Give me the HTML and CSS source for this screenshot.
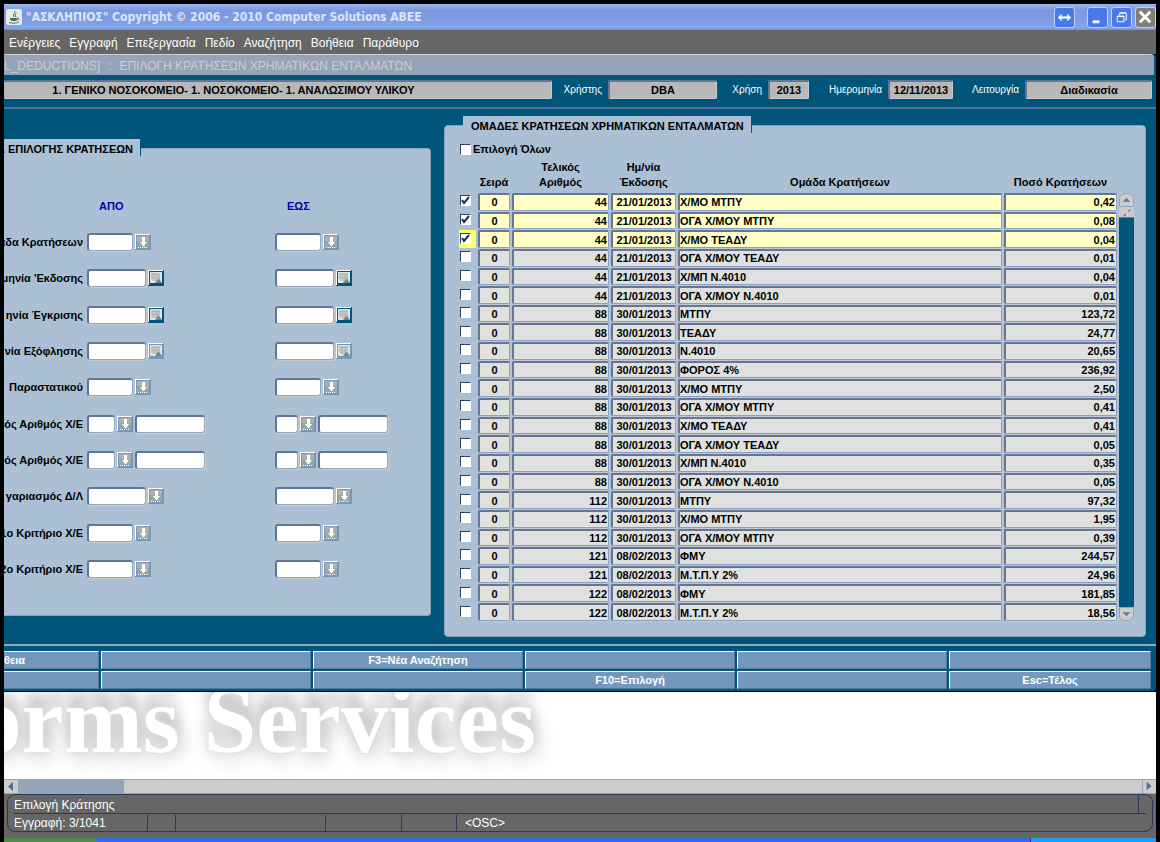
FILE: index.html
```html
<!DOCTYPE html>
<html lang="el">
<head>
    <meta charset="UTF-8">
    <meta name="viewport" content="width=device-width, initial-scale=1.0">
    <title>ΑΣΚΛΗΠΙΟΣ</title>
    <link rel="stylesheet" href="styles.css">
</head>
<body>
    <svg class="defs" width="0" height="0" aria-hidden="true">
        <symbol id="lov" viewBox="0 0 16 16">
            <path d="M0 0h16v16H0z" fill="#7498bc"/>
            <path d="M0 0h15v1H1v14H0z" fill="#fff"/>
            <path d="M2 2h12v5H2z" fill="#b0b0b0"/>
            <path d="M2 7h12v7H2z" fill="#9aa6a2"/>
            <path d="M7 3h3v5h2l-3 4h-1L5 8h2z" fill="#fff"/>
            <path d="M3 13.5h10" stroke="#fff" stroke-dasharray="1 1"/>
        </symbol>
        <symbol id="cal" viewBox="0 0 16 16">
            <path d="M0 0h16v16H0z" fill="currentColor"/>
            <path d="M0 0h15v1H1v14H0z" fill="#fff"/>
            <path d="M2 2h12v11H2z" fill="#e2e4e4"/>
            <path d="M3 3h9v8H5l-2-2z" fill="#c2c2c4"/>
            <path d="M4 4.5h8M4 7.5h8" stroke="#aaa" stroke-dasharray="1 1"/>
            <path d="M7 13l3-4h1l3 4z" fill="#6f8880"/>
        </symbol>
    </svg>

    <div class="window">
        <header class="titlebar">
            <svg class="java" viewBox="0 0 16 16" aria-hidden="true">
                <rect x="0" y="0" width="16" height="16" rx="2" fill="#e9ece6"/>
                <path d="M8.5 2c2 2-2.5 3-.5 6M10.5 4c-2 1.5-1.5 2-.5 4" stroke="#3f7a3c" fill="none"/>
                <path d="M4 9h7v1.5c0 2-6 2-7 0z" fill="#4c6f66"/>
                <path d="M11 9c3-.5 2 2.5-.5 2M3 13.5c3 1 7 1 10-.5" stroke="#4c6f66" fill="none"/>
            </svg>
            <h1>"ΑΣΚΛΗΠΙΟΣ" Copyright © 2006 - 2010 Computer Solutions ABEE</h1>
            <div class="controls">
                <button class="ctl ctl-move" aria-label="Μετακίνηση">
                    <svg viewBox="0 0 20 20"><path d="M3 10l4-4v3h6V6l4 4-4 4v-3H7v3z" fill="#fff"/></svg>
                </button>
                <button class="ctl" aria-label="Ελαχιστοποίηση">
                    <svg viewBox="0 0 20 20"><path d="M5 13h7v3H5z" fill="#fff"/></svg>
                </button>
                <button class="ctl" aria-label="Επαναφορά">
                    <svg viewBox="0 0 20 20"><path d="M8 8V5.5h7v7h-2M5.5 8.5h7v6h-7zM5 9h8M8 5h7" stroke="#fff" fill="none"/></svg>
                </button>
                <button class="ctl ctl-close" aria-label="Κλείσιμο">
                    <svg viewBox="0 0 20 20"><path d="M4 4l11 11M15 4L4 15" stroke="#fff" stroke-width="3"/></svg>
                </button>
            </div>
        </header>

        <nav class="menubar">
            <a href="#">Ενέργειες</a>
            <a href="#">Εγγραφή</a>
            <a href="#">Επεξεργασία</a>
            <a href="#">Πεδίο</a>
            <a href="#">Αναζήτηση</a>
            <a href="#">Βοήθεια</a>
            <a href="#">Παράθυρο</a>
        </nav>

        <main class="form">
            <h2 class="form-title"><span>L_DEDUCTIONS]</span><span>:</span><span>ΕΠΙΛΟΓΗ ΚΡΑΤΗΣΕΩΝ ΧΡΗΜΑΤΙΚΩΝ ΕΝΤΑΛΜΑΤΩΝ</span></h2>

            <div class="info">
                <input class="ro ro-unit" aria-label="Μονάδα" value="1. ΓΕΝΙΚΟ ΝΟΣΟΚΟΜΕΙΟ- 1. ΝΟΣΟΚΟΜΕΙΟ- 1. ΑΝΑΛΩΣΙΜΟΥ ΥΛΙΚΟΥ" readonly>
                <label for="user">Χρήστης</label>
                <input class="ro" id="user" value="DBA" readonly>
                <label for="year">Χρήση</label>
                <input class="ro" id="year" value="2013" readonly>
                <label for="date">Ημερομηνία</label>
                <input class="ro" id="date" value="12/11/2013" readonly>
                <label for="mode">Λειτουργία</label>
                <input class="ro" id="mode" value="Διαδικασία" readonly>
            </div>

            <div class="panels">
                <section class="panel criteria">
                    <h3 class="tab">Α ΕΠΙΛΟΓΗΣ ΚΡΑΤΗΣΕΩΝ</h3>
                    <div class="range-head">
                        <span>ΑΠΟ</span>
                        <span>ΕΩΣ</span>
                    </div>
                    <div class="ranges">
                        <div class="range">
                            <label for="c1">άδα Κρατήσεων</label>
                            <div class="pick"><input id="c1" class="w-s"><button aria-label="Λίστα"><svg><use href="#lov"/></svg></button></div>
                            <div class="pick"><input class="w-s" aria-label="Έως"><button aria-label="Λίστα"><svg><use href="#lov"/></svg></button></div>
                        </div>
                        <div class="range">
                            <label for="c2">μηνία 'Εκδοσης</label>
                            <div class="pick"><input id="c2" class="w-m"><button class="dark" aria-label="Ημερολόγιο"><svg><use href="#cal"/></svg></button></div>
                            <div class="pick"><input class="w-m" aria-label="Έως"><button class="dark" aria-label="Ημερολόγιο"><svg><use href="#cal"/></svg></button></div>
                        </div>
                        <div class="range">
                            <label for="c3">ηνία Έγκρισης</label>
                            <div class="pick"><input id="c3" class="w-m"><button class="dark" aria-label="Ημερολόγιο"><svg><use href="#cal"/></svg></button></div>
                            <div class="pick"><input class="w-m" aria-label="Έως"><button class="dark" aria-label="Ημερολόγιο"><svg><use href="#cal"/></svg></button></div>
                        </div>
                        <div class="range">
                            <label for="c4">νία Εξόφλησης</label>
                            <div class="pick"><input id="c4" class="w-m"><button aria-label="Ημερολόγιο"><svg><use href="#cal"/></svg></button></div>
                            <div class="pick"><input class="w-m" aria-label="Έως"><button aria-label="Ημερολόγιο"><svg><use href="#cal"/></svg></button></div>
                        </div>
                        <div class="range">
                            <label for="c5">Παραστατικού</label>
                            <div class="pick"><input id="c5" class="w-s"><button aria-label="Λίστα"><svg><use href="#lov"/></svg></button></div>
                            <div class="pick"><input class="w-s" aria-label="Έως"><button aria-label="Λίστα"><svg><use href="#lov"/></svg></button></div>
                        </div>
                        <div class="range">
                            <label for="c6">ός Αριθμός Χ/Ε</label>
                            <div class="pick"><input id="c6" class="w-xs"><button aria-label="Λίστα"><svg><use href="#lov"/></svg></button><input class="w-l" aria-label="Αριθμός από"></div>
                            <div class="pick"><input class="w-xxs" aria-label="Έως"><button aria-label="Λίστα"><svg><use href="#lov"/></svg></button><input class="w-l" aria-label="Αριθμός έως"></div>
                        </div>
                        <div class="range">
                            <label for="c7">ός Αριθμός Χ/Ε</label>
                            <div class="pick"><input id="c7" class="w-xs"><button aria-label="Λίστα"><svg><use href="#lov"/></svg></button><input class="w-l" aria-label="Αριθμός από"></div>
                            <div class="pick"><input class="w-xxs" aria-label="Έως"><button aria-label="Λίστα"><svg><use href="#lov"/></svg></button><input class="w-l" aria-label="Αριθμός έως"></div>
                        </div>
                        <div class="range">
                            <label for="c8">γαριασμός Δ/Λ</label>
                            <div class="pick"><input id="c8" class="w-m"><button aria-label="Λίστα"><svg><use href="#lov"/></svg></button></div>
                            <div class="pick"><input class="w-m" aria-label="Έως"><button aria-label="Λίστα"><svg><use href="#lov"/></svg></button></div>
                        </div>
                        <div class="range">
                            <label for="c9">1ο Κριτήριο Χ/Ε</label>
                            <div class="pick"><input id="c9" class="w-s"><button aria-label="Λίστα"><svg><use href="#lov"/></svg></button></div>
                            <div class="pick"><input class="w-s" aria-label="Έως"><button aria-label="Λίστα"><svg><use href="#lov"/></svg></button></div>
                        </div>
                        <div class="range">
                            <label for="c10">2ο Κριτήριο Χ/Ε</label>
                            <div class="pick"><input id="c10" class="w-s"><button aria-label="Λίστα"><svg><use href="#lov"/></svg></button></div>
                            <div class="pick"><input class="w-s" aria-label="Έως"><button aria-label="Λίστα"><svg><use href="#lov"/></svg></button></div>
                        </div>
                    </div>
                </section>

                <section class="panel groups">
                    <h3 class="tab">ΟΜΑΔΕΣ ΚΡΑΤΗΣΕΩΝ ΧΡΗΜΑΤΙΚΩΝ ΕΝΤΑΛΜΑΤΩΝ</h3>
                    <label class="all"><input type="checkbox">Επιλογή Όλων</label>
                    <div class="grid">
                        <table>
                            <thead>
                                <tr>
                                    <th class="c-check"></th>
                                    <th class="c-row">Σειρά</th>
                                    <th class="c-num">Τελικός<br>Αριθμός</th>
                                    <th class="c-date">Ημ/νία<br>Έκδοσης</th>
                                    <th>Ομάδα Κρατήσεων</th>
                                    <th class="c-sum">Ποσό Κρατήσεων</th>
                                </tr>
                            </thead>
                            <tbody>
                                <tr class="on"><td><input type="checkbox" aria-label="Επιλογή" checked></td><td>0</td><td>44</td><td>21/01/2013</td><td>Χ/ΜΟ ΜΤΠΥ</td><td>0,42</td></tr>
                                <tr class="on"><td><input type="checkbox" aria-label="Επιλογή" checked></td><td>0</td><td>44</td><td>21/01/2013</td><td>ΟΓΑ Χ/ΜΟΥ ΜΤΠΥ</td><td>0,08</td></tr>
                                <tr class="on current"><td><input type="checkbox" aria-label="Επιλογή" checked></td><td>0</td><td>44</td><td>21/01/2013</td><td>Χ/ΜΟ ΤΕΑΔΥ</td><td>0,04</td></tr>
                                <tr><td><input type="checkbox" aria-label="Επιλογή"></td><td>0</td><td>44</td><td>21/01/2013</td><td>ΟΓΑ Χ/ΜΟΥ ΤΕΑΔΥ</td><td>0,01</td></tr>
                                <tr><td><input type="checkbox" aria-label="Επιλογή"></td><td>0</td><td>44</td><td>21/01/2013</td><td>Χ/ΜΠ Ν.4010</td><td>0,04</td></tr>
                                <tr><td><input type="checkbox" aria-label="Επιλογή"></td><td>0</td><td>44</td><td>21/01/2013</td><td>ΟΓΑ Χ/ΜΟΥ Ν.4010</td><td>0,01</td></tr>
                                <tr><td><input type="checkbox" aria-label="Επιλογή"></td><td>0</td><td>88</td><td>30/01/2013</td><td>ΜΤΠΥ</td><td>123,72</td></tr>
                                <tr><td><input type="checkbox" aria-label="Επιλογή"></td><td>0</td><td>88</td><td>30/01/2013</td><td>ΤΕΑΔΥ</td><td>24,77</td></tr>
                                <tr><td><input type="checkbox" aria-label="Επιλογή"></td><td>0</td><td>88</td><td>30/01/2013</td><td>Ν.4010</td><td>20,65</td></tr>
                                <tr><td><input type="checkbox" aria-label="Επιλογή"></td><td>0</td><td>88</td><td>30/01/2013</td><td>ΦΟΡΟΣ 4%</td><td>236,92</td></tr>
                                <tr><td><input type="checkbox" aria-label="Επιλογή"></td><td>0</td><td>88</td><td>30/01/2013</td><td>Χ/ΜΟ ΜΤΠΥ</td><td>2,50</td></tr>
                                <tr><td><input type="checkbox" aria-label="Επιλογή"></td><td>0</td><td>88</td><td>30/01/2013</td><td>ΟΓΑ Χ/ΜΟΥ ΜΤΠΥ</td><td>0,41</td></tr>
                                <tr><td><input type="checkbox" aria-label="Επιλογή"></td><td>0</td><td>88</td><td>30/01/2013</td><td>Χ/ΜΟ ΤΕΑΔΥ</td><td>0,41</td></tr>
                                <tr><td><input type="checkbox" aria-label="Επιλογή"></td><td>0</td><td>88</td><td>30/01/2013</td><td>ΟΓΑ Χ/ΜΟΥ ΤΕΑΔΥ</td><td>0,05</td></tr>
                                <tr><td><input type="checkbox" aria-label="Επιλογή"></td><td>0</td><td>88</td><td>30/01/2013</td><td>Χ/ΜΠ Ν.4010</td><td>0,35</td></tr>
                                <tr><td><input type="checkbox" aria-label="Επιλογή"></td><td>0</td><td>88</td><td>30/01/2013</td><td>ΟΓΑ Χ/ΜΟΥ Ν.4010</td><td>0,05</td></tr>
                                <tr><td><input type="checkbox" aria-label="Επιλογή"></td><td>0</td><td>112</td><td>30/01/2013</td><td>ΜΤΠΥ</td><td>97,32</td></tr>
                                <tr><td><input type="checkbox" aria-label="Επιλογή"></td><td>0</td><td>112</td><td>30/01/2013</td><td>Χ/ΜΟ ΜΤΠΥ</td><td>1,95</td></tr>
                                <tr><td><input type="checkbox" aria-label="Επιλογή"></td><td>0</td><td>112</td><td>30/01/2013</td><td>ΟΓΑ Χ/ΜΟΥ ΜΤΠΥ</td><td>0,39</td></tr>
                                <tr><td><input type="checkbox" aria-label="Επιλογή"></td><td>0</td><td>121</td><td>08/02/2013</td><td>ΦΜΥ</td><td>244,57</td></tr>
                                <tr><td><input type="checkbox" aria-label="Επιλογή"></td><td>0</td><td>121</td><td>08/02/2013</td><td>Μ.Τ.Π.Υ 2%</td><td>24,96</td></tr>
                                <tr><td><input type="checkbox" aria-label="Επιλογή"></td><td>0</td><td>122</td><td>08/02/2013</td><td>ΦΜΥ</td><td>181,85</td></tr>
                                <tr><td><input type="checkbox" aria-label="Επιλογή"></td><td>0</td><td>122</td><td>08/02/2013</td><td>Μ.Τ.Π.Υ 2%</td><td>18,56</td></tr>
                            </tbody>
                        </table>
                        <div class="vscroll">
                            <button class="up" aria-label="Πάνω"><svg viewBox="0 0 15 14"><path d="M3 9l4-4h1l4 4z" fill="#64769a"/></svg></button>
                            <span class="vthumb"><svg viewBox="0 0 13 10"><path d="M4 8l2-2M8 4l2-2" stroke="#64769a"/></svg></span>
                            <span class="vtrack"></span>
                            <button class="down" aria-label="Κάτω"><svg viewBox="0 0 15 14"><path d="M3 5h9L8 9H7z" fill="#64769a"/></svg></button>
                        </div>
                    </div>
                </section>
            </div>

            <div class="keys">
                <button class="first">θεια</button>
                <button></button>
                <button>F3=Νέα Αναζήτηση</button>
                <button></button>
                <button></button>
                <button></button>
                <button class="first"></button>
                <button></button>
                <button></button>
                <button>F10=Επιλογή</button>
                <button></button>
                <button>Esc=Τέλος</button>
            </div>
        </main>

        <div class="desktop"><span>orms Services</span></div>

        <div class="hscroll">
            <button class="left" aria-label="Αριστερά"><svg viewBox="0 0 14 13"><path d="M9 2v9L4 6.5z" fill="#4f6b94"/></svg></button>
            <span class="hthumb"></span>
            <button class="right" aria-label="Δεξιά"><svg viewBox="0 0 14 13"><path d="M4 2v9l5-4.5z" fill="#4f6b94"/></svg></button>
        </div>

        <footer class="status">
            <div class="status-box">
                <p class="message">Επιλογή Κράτησης</p>
                <div class="cells">
                    <span class="s-record">Εγγραφή: 3/1041</span>
                    <span class="s-a"></span>
                    <span class="s-b"></span>
                    <span class="s-c"></span>
                    <span class="s-d"></span>
                    <span class="s-osc">&lt;OSC&gt;</span>
                </div>
            </div>
        </footer>

        <div class="taskbar"><span class="start"></span><span class="tray"></span></div>
    </div>
</body>
</html>
```
FILE: styles.css
```css
* {
    box-sizing: border-box;
}
body {
    margin: 0;
    background-color: #000;
    font-family: "Liberation Sans", Arial, sans-serif;
    font-size: 11px;
    color: #000;
}
h1, h2, h3, p {
    margin: 0;
    font-weight: normal;
}
button {
    padding: 0;
    border: none;
    font: inherit;
    color: inherit;
    background: none;
}
svg {
    display: block;
}
.defs {
    position: absolute;
}
.window {
    margin: 4px 4px 0;
    min-height: calc(100vh - 4px);
    overflow: hidden;
    display: flex;
    flex-direction: column;
}

/* title bar and menu */
.titlebar {
    display: flex;
    align-items: center;
    height: 26px;
    padding: 0 0 0 2px;
    background: linear-gradient(#9cb8ee, #7c98e0 25%, #7f9ee4 65%, #82a8ec 90%, #6f92dc);
}
.java {
    width: 16px;
    height: 16px;
    margin-right: 4px;
}
.titlebar h1 {
    flex: 1;
    font-family: "DejaVu Sans Condensed", "DejaVu Sans", sans-serif;
    font-size: 12px;
    font-weight: bold;
    color: #dbe4fa;
}
.controls {
    display: flex;
    gap: 3px;
}
.ctl {
    width: 21px;
    height: 21px;
    border: 1px solid #c3d2f6;
    border-radius: 3px;
    background-color: #4a78e4;
}
.ctl-move {
    margin-right: 9px;
}
.ctl-close {
    background-color: #7f8078;
}
.menubar {
    display: flex;
    align-items: center;
    gap: 9px;
    height: 24px;
    padding: 2px 5px 0;
    background-color: #666;
}
.menubar a {
    color: #fff;
    font-size: 12px;
    text-decoration: none;
}

/* form window */
.form {
    background-color: #00557b;
    border-bottom: 1px solid #000;
    border-radius: 0 4px 4px 0;
    overflow: hidden;
}
.form-title {
    display: flex;
    gap: 8px;
    height: 21px;
    margin-right: 2px;
    border-top: 1px solid #ccc;
    border-top-right-radius: 4px;
    background-color: #95a4b8;
    color: #ccc;
    font-size: 12px;
    line-height: 22px;
}
.info {
    display: grid;
    grid-template-columns: 1fr 56px 109px 51px 41px 79px 65px 72px 127px;
    padding: 5px 4px 7px 0;
    border-bottom: 2px solid #54719b;
}
.info label {
    padding-right: 6px;
    color: #fff;
    font-size: 10px;
    line-height: 20px;
    text-align: right;
}
.ro {
    min-width: 0;
    width: 100%;
    height: 19px;
    padding: 0;
    border: 2px solid #64759a;
    border-right: 1px solid #ccc;
    border-bottom: 1px solid #ccc;
    border-radius: 2px;
    background-color: #b8b8b8;
    font: bold 11px "Liberation Sans", Arial, sans-serif;
    text-align: center;
}
.ro-unit {
    padding-right: 88px;
    border-left: none;
}

/* panels */
.panels {
    display: flex;
    align-items: flex-start;
    gap: 13px;
    padding: 16px 10px 7px 0;
}
.panel {
    border: 1px solid #8fa0ba;
    border-radius: 4px;
    background-color: #abc0d4;
    font-weight: bold;
}
.tab {
    width: fit-content;
    height: 17px;
    border-right: 1px solid #00557b;
    background-color: #abc0d4;
    font-size: 11px;
    font-weight: bold;
    line-height: 20px;
}
.criteria {
    width: 427px;
    height: 468px;
    margin-top: 23px;
    border-left: none;
    border-radius: 0 4px 4px 0;
}
.criteria .tab {
    margin: -10px 0 0 -7px;
    padding-right: 7px;
}
.range-head {
    display: grid;
    grid-template-columns: 188px 1fr;
    padding: 43px 0 0 95px;
    color: #0000a8;
    line-height: 14px;
}
.ranges {
    display: flex;
    flex-direction: column;
    justify-content: space-between;
    height: 345px;
    margin-top: 20px;
}
.range {
    display: grid;
    grid-template-columns: 83px 188px 1fr;
    align-items: center;
    height: 18px;
}
.range label {
    display: flex;
    justify-content: flex-end;
    padding-right: 4px;
    overflow: hidden;
    white-space: nowrap;
}
.pick {
    display: flex;
    align-items: center;
    gap: 2px;
}
.pick input {
    height: 18px;
    padding: 0 2px;
    border: 1px solid #95a4b8;
    border-top: 2px solid #64759a;
    border-left: 2px solid #64759a;
    border-radius: 3px;
    box-shadow: 1px 1px 0 #ccc;
    background-color: #fff;
}
.pick button {
    width: 16px;
    height: 16px;
    color: #7498bc;
}
.pick button.dark {
    color: #00557b;
}
.pick svg {
    width: 16px;
    height: 16px;
}
.w-xxs {
    width: 23px;
}
.w-xs {
    width: 28px;
}
.w-s {
    width: 46px;
}
.w-m {
    width: 59px;
}
.w-l {
    width: 70px;
}

/* deduction groups */
.groups {
    flex: 1;
    height: 512px;
}
.groups .tab {
    margin: -10px 0 0 18px;
    padding: 0 7px 0 8px;
}
.all {
    display: flex;
    align-items: center;
    gap: 2px;
    height: 16px;
    margin: 8px 0 0 15px;
}
input[type="checkbox"] {
    appearance: none;
    display: block;
    width: 11px;
    height: 11px;
    margin: 0;
    border: 1px solid #fff;
    border-top-color: #333f5c;
    border-left-color: #333f5c;
    background-color: #fff;
}
input[type="checkbox"]:checked {
    background-image: url("data:image/svg+xml,%3Csvg xmlns='http://www.w3.org/2000/svg' viewBox='0 0 9 9'%3E%3Cpath d='M1 4l2 3 5-6' fill='none' stroke='%2323304e' stroke-width='2'/%3E%3C/svg%3E");
}
.grid {
    display: flex;
    margin: 2px 11px 0 12px;
}
.grid table {
    flex: 1;
    height: 463px;
    table-layout: fixed;
    border-spacing: 2px 1px;
}
.grid thead tr {
    height: 32px;
}
.grid th {
    padding: 0 0 2px;
    line-height: 15px;
    vertical-align: bottom;
    white-space: nowrap;
}
.c-check {
    width: 17px;
}
.c-row {
    width: 32px;
}
.c-num {
    width: 97px;
}
.c-date {
    width: 65px;
}
.c-sum {
    width: 113px;
}
.grid td {
    padding: 0;
    border: 1px solid #8c9fbe;
    border-top: 2px solid #64759a;
    border-left: 2px solid #64759a;
    border-radius: 2px;
    box-shadow: 1px 1px 0 #c4c8cc;
    background-color: #dfe1df;
    line-height: 12px;
    text-align: center;
}
.grid td:first-child {
    padding: 0 0 2px 1px;
    border: none;
    border-radius: 0;
    box-shadow: none;
    background: none;
}
.grid td:nth-child(3),
.grid td:nth-child(6) {
    padding-right: 1px;
    text-align: right;
}
.grid td:nth-child(5) {
    text-align: left;
}
.grid .on td {
    background-color: #ffffc6;
}
.grid .on td:first-child {
    background: none;
}
.grid .current td:first-child {
    background-color: #ffff66;
}
.vscroll {
    display: flex;
    flex-direction: column;
    width: 15px;
    margin: 34px 0 1px;
}
.vscroll button {
    height: 14px;
    border: 1px solid #95a4b8;
    background-color: #ccc;
}
.vscroll .up {
    border-radius: 6px 6px 0 0;
}
.vscroll .down {
    border-radius: 0 0 6px 6px;
}
.vthumb {
    height: 11px;
    border-bottom: 1px solid #64759a;
    background-color: #ccc;
}
.vtrack {
    flex: 1;
    background-color: #00557b;
}

/* function keys */
.keys {
    display: grid;
    grid-template-columns: 95px repeat(4, 210px) 1fr;
    gap: 2px;
    padding: 5px 5px 2px 0;
    border-top: 2px solid #95a4b8;
}
.keys button {
    height: 18px;
    border: 1px solid #5a7699;
    border-top-color: #fff;
    border-left-color: #fff;
    background-color: #7498bc;
    color: #fff;
    font-weight: bold;
}
.keys .first {
    border-left: none;
    text-align: left;
}

/* area behind the form */
.desktop {
    height: 87px;
    overflow: hidden;
    background-color: #fff;
}
.desktop span {
    display: block;
    margin: -27px 0 0 -30px;
    color: #fff;
    font: bold 95px/110px "Liberation Serif", "Times New Roman", serif;
    text-shadow: 0 0 4px #ddd, 0 -16px 12px #ccc, 0 -4px 16px #ccc, 4px 6px 20px #ccc;
    white-space: nowrap;
}
.hscroll {
    display: flex;
    height: 15px;
    border: 1px solid #95a4b8;
    border-width: 1px 0;
    background-color: #ccc;
}
.hscroll button {
    width: 14px;
    background-color: #ccc;
}
.hscroll .left {
    border-radius: 7px 0 0 7px;
}
.hscroll .right {
    margin-left: auto;
    border-left: 1px solid #95a4b8;
}
.hthumb {
    width: 106px;
    background-color: #95a4b8;
}

/* status line */
.status {
    padding: 0 3px 6px;
    background-color: #666;
    color: #fff;
    font-size: 12px;
}
.status-box {
    height: 38px;
    padding: 0 6px;
    border: 1px solid #2c3a55;
    border-radius: 8px;
}
.message {
    height: 19px;
    border-bottom: 1px solid #2c3a55;
    line-height: 20px;
}
.message::after {
    content: "";
    float: right;
    height: 18px;
    margin-right: 7px;
    border-right: 1px solid #2c3a55;
}
.cells {
    display: flex;
    height: 16px;
    margin-top: 1px;
    line-height: 16px;
}
.cells span {
    border-right: 1px solid #2c3a55;
}
.s-record {
    width: 134px;
}
.s-a {
    width: 28px;
}
.s-b {
    width: 150px;
}
.s-c {
    width: 76px;
}
.s-d {
    width: 55px;
}
.cells .s-osc {
    padding-left: 8px;
    border-right: none;
}
.taskbar {
    display: flex;
    flex: 1;
    justify-content: space-between;
    min-height: 4px;
    background-color: #2f6fe0;
}
.start {
    width: 93px;
    border-radius: 0 4px 0 0;
    background-color: #4f8a4c;
}
.tray {
    width: 126px;
    border-left: 1px solid #1b3f78;
    background-color: #1f9ff0;
}
```
